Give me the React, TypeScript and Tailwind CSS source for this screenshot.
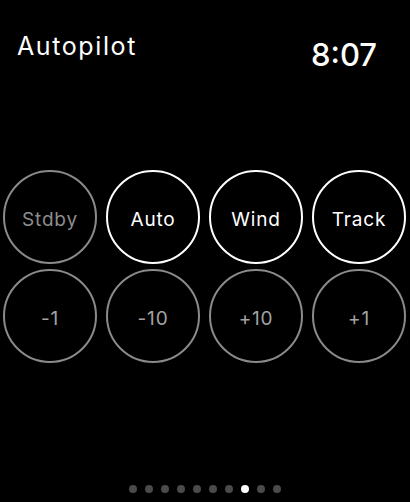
import React from "react";

type Btn = { label: string; active?: boolean };

const modes: Btn[] = [
  { label: "Stdby" },
  { label: "Auto", active: true },
  { label: "Wind", active: true },
  { label: "Track", active: true },
];

const steps: Btn[] = [{ label: "-1" }, { label: "-10" }, { label: "+10" }, { label: "+1" }];

const RoundButton: React.FC<{ btn: Btn; dim?: string }> = ({ btn, dim }) => (
  <button
    className={`w-[94px] h-[94px] rounded-full border-2 flex items-center justify-center pt-1 text-[19px] leading-none tracking-[0.8px] ${
      btn.active ? "border-white text-white" : `border-[#8a8a8a] ${dim}`
    }`}
  >
    {btn.label}
  </button>
);

export default function App() {
  return (
    <div
      className="w-[410px] h-[502px] bg-black text-white overflow-hidden"
      style={{ fontFamily: "Inter, 'Noto Sans', sans-serif" }}
    >
      {/* header */}
      <div className="h-[170px] flex justify-between items-start">
        <span className="ml-[17px] mt-[34px] text-[25px] leading-none tracking-[1.6px]">Autopilot</span>
        <span className="mr-[33px] mt-[39px] text-[31px] leading-none font-medium">8:07</span>
      </div>

      {/* buttons */}
      <div className="flex flex-col gap-[5px] pl-[3px]">
        <div className="flex gap-[9px]">
          {modes.map((b) => (
            <RoundButton key={b.label} btn={b} dim="text-[#8e8e8e]" />
          ))}
        </div>
        <div className="flex gap-[9px]">
          {steps.map((b) => (
            <RoundButton key={b.label} btn={b} dim="text-[#a3a3a3]" />
          ))}
        </div>
      </div>

      {/* page dots */}
      <div className="mt-[122px] flex justify-center gap-2">
        {Array.from({ length: 10 }).map((_, i) => (
          <span
            key={i}
            className={`w-2 h-2 rounded-full ${i === 7 ? "bg-white" : "bg-[#4a4a4a]"}`}
          />
        ))}
      </div>
    </div>
  );
}
